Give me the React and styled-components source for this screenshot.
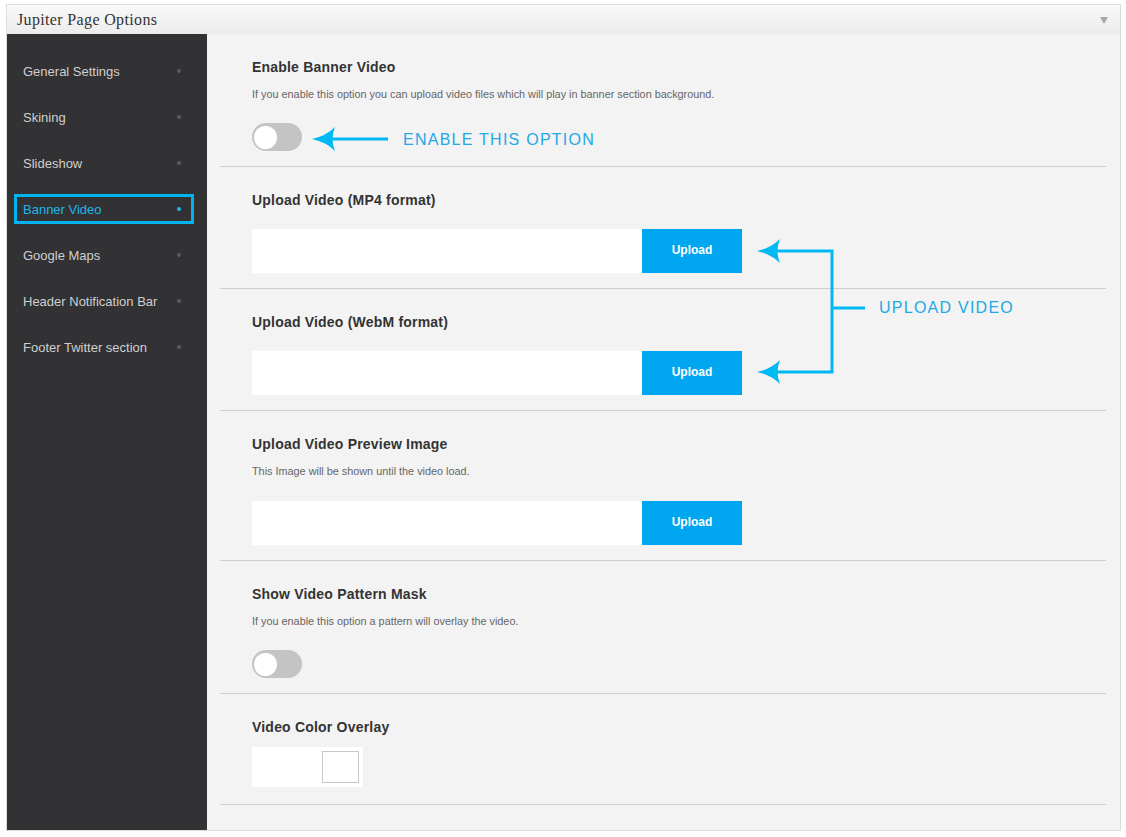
import React from "react";
import styled, { createGlobalStyle } from "styled-components";

const Global = createGlobalStyle`
  html, body { margin: 0; padding: 0; background: #ffffff; }
  body { font-family: "Liberation Sans", Arial, sans-serif; }
  #root { padding: 4px 0 0 6px; }
`;

const Frame = styled.div`
  width: 1113px;
  border: 1px solid #dcdcdc;
  background: #f4f4f4;
  display: flex;
  flex-direction: column;
`;

const Header = styled.div`
  height: 29px;
  display: flex;
  align-items: center;
  justify-content: space-between;
  padding: 0 12px 0 10px;
  background: linear-gradient(#f9f9f9, #ececec);
`;

const HeaderTitle = styled.h3`
  margin: 0;
  font-family: "Liberation Serif", "Times New Roman", serif;
  font-weight: normal;
  font-size: 16px;
  letter-spacing: 0.35px;
  color: #333;
`;

const Caret = styled.span`
  width: 0;
  height: 0;
  border-left: 4px solid transparent;
  border-right: 4px solid transparent;
  border-top: 7px solid #a5a5a5;
  margin-top: 2px;
`;

const Body = styled.div`
  display: flex;
`;

const Sidebar = styled.nav`
  width: 200px;
  flex-shrink: 0;
  background: #323133;
  padding-top: 22px;
  display: flex;
  flex-direction: column;
  gap: 16px;
`;

const NavItem = styled.div`
  margin: 0 13px 0 7px;
  height: 30px;
  box-sizing: border-box;
  border: 3px solid ${(p) => (p.$active ? "#00b4f0" : "transparent")};
  padding: 0 10px 0 6px;
  display: flex;
  align-items: center;
  justify-content: space-between;
  font-size: 13px;
  color: ${(p) => (p.$active ? "#1db6ee" : "#cfcfcf")};
`;

const NavDot = styled.span`
  width: 4px;
  height: 4px;
  border-radius: 50%;
  background: ${(p) => (p.$active ? "#1db6ee" : "#5a5a5c")};
`;

const Content = styled.main`
  position: relative;
  flex: 1;
  padding-bottom: 25px;
  background: #f3f3f3;
`;

const Section = styled.section`
  margin: 0 14px 0 13px;
  padding: 25px 0 15px 32px;
  border-bottom: 1px solid #cfcfcf;
  display: flex;
  flex-direction: column;
  align-items: flex-start;
`;

const Title = styled.h4`
  margin: 0;
  font-size: 14px;
  line-height: 16px;
  letter-spacing: 0.2px;
  font-weight: bold;
  color: #333;
`;

const Desc = styled.p`
  margin: 12px 0 0;
  font-size: 10.85px;
  line-height: 14px;
  color: #666;
`;

const Toggle = styled.div`
  margin-top: 22px;
  width: 50px;
  height: 28px;
  border-radius: 14px;
  background: #c4c4c4;
  box-sizing: border-box;
  padding: 2px;
  display: flex;
  align-items: center;
`;

const Knob = styled.span`
  width: 23px;
  height: 23px;
  border-radius: 50%;
  background: #ffffff;
`;

const UploadRow = styled.div`
  margin-top: ${(p) => p.$gap}px;
  display: flex;
  height: 44px;
`;

const UploadInput = styled.div`
  width: 390px;
  background: #ffffff;
`;

const UploadButton = styled.button`
  width: 100px;
  border: none;
  background: #00a6ef;
  color: #ffffff;
  font-family: "Liberation Sans", Arial, sans-serif;
  font-size: 12px;
  font-weight: bold;
  padding: 0 0 2px;
`;

const ColorBox = styled.div`
  margin: 12px 0 2px;
  width: 111px;
  height: 40px;
  background: #ffffff;
  box-sizing: border-box;
  padding: 4px 4px 4px 70px;
  display: flex;
`;

const Swatch = styled.div`
  flex: 1;
  border: 1px solid #c8c8c8;
  background: #ffffff;
`;

const Overlay = styled.svg`
  position: absolute;
  left: 0;
  top: 0;
  width: 913px;
  height: 796px;
  pointer-events: none;
`;

const Callout = styled.span`
  position: absolute;
  left: ${(p) => p.$x}px;
  top: ${(p) => p.$y}px;
  font-family: "Liberation Sans", Arial, sans-serif;
  font-size: 16px;
  line-height: 20px;
  letter-spacing: 1.25px;
  color: #22a8e6;
  white-space: nowrap;
`;

const navItems = [
  "General Settings",
  "Skining",
  "Slideshow",
  "Banner Video",
  "Google Maps",
  "Header Notification Bar",
  "Footer Twitter section",
];

const Upload = ({ gap }) => (
  <UploadRow $gap={gap}>
    <UploadInput />
    <UploadButton>Upload</UploadButton>
  </UploadRow>
);

const arrowHead = (x, y) =>
  `M ${x} ${y} Q ${x + 14} ${y - 3} ${x + 23} ${y - 12} Q ${x + 18} ${y} ${x + 23} ${y + 12} Q ${x + 14} ${y + 3} ${x} ${y} Z`;

export default function App() {
  return (
    <>
      <Global />
      <Frame>
        <Header>
          <HeaderTitle>Jupiter Page Options</HeaderTitle>
          <Caret />
        </Header>
        <Body>
          <Sidebar>
            {navItems.map((n) => (
              <NavItem key={n} $active={n === "Banner Video"}>
                {n}
                <NavDot $active={n === "Banner Video"} />
              </NavItem>
            ))}
          </Sidebar>
          <Content>
            <Section>
              <Title>Enable Banner Video</Title>
              <Desc>
                If you enable this option you can upload video files which will play in banner section background.
              </Desc>
              <Toggle>
                <Knob />
              </Toggle>
            </Section>
            <Section>
              <Title>Upload Video (MP4 format)</Title>
              <Upload gap={21} />
            </Section>
            <Section>
              <Title>Upload Video (WebM format)</Title>
              <Upload gap={21} />
            </Section>
            <Section>
              <Title>Upload Video Preview Image</Title>
              <Desc>This Image will be shown until the video load.</Desc>
              <Upload gap={23} />
            </Section>
            <Section>
              <Title>Show Video Pattern Mask</Title>
              <Desc>If you enable this option a pattern will overlay the video.</Desc>
              <Toggle>
                <Knob />
              </Toggle>
            </Section>
            <Section>
              <Title>Video Color Overlay</Title>
              <ColorBox>
                <Swatch />
              </ColorBox>
            </Section>

            <Overlay viewBox="0 0 913 796">
              <g fill="#00b9f2" stroke="none">
                <path d={arrowHead(105, 105)} />
                <path d={arrowHead(550, 217)} />
                <path d={arrowHead(550, 338)} />
              </g>
              <g fill="none" stroke="#00b9f2" strokeWidth="3">
                <line x1="125" y1="105" x2="181" y2="105" />
                <polyline points="570,217 625,217 625,338 570,338" />
                <line x1="625" y1="274" x2="658" y2="274" />
              </g>
            </Overlay>
            <Callout $x={196} $y={96}>ENABLE THIS OPTION</Callout>
            <Callout $x={672} $y={264}>UPLOAD VIDEO</Callout>
          </Content>
        </Body>
      </Frame>
    </>
  );
}
